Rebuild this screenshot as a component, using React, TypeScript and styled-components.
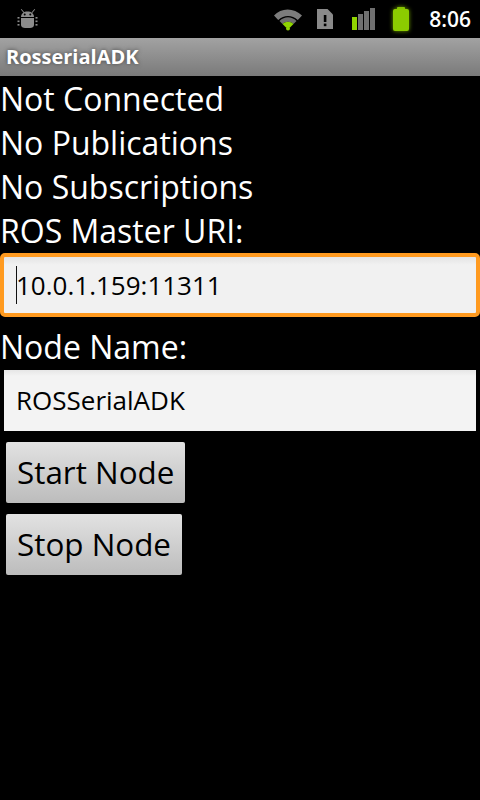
import { createGlobalStyle, styled } from "styled-components";

const Global = createGlobalStyle`
  html, body {
    margin: 0;
    padding: 0;
    background: #000;
  }
  body {
    font-family: "Open Sans", "Noto Sans", sans-serif;
  }
`;

export default function App() {
  return (
    <Screen>
      <Global />
      <StatusBar>
        <BugIcon />
        <StatusRight>
          <WifiIcon />
          <SimIcon />
          <SignalIcon />
          <BatteryIcon />
          <Clock>8:06</Clock>
        </StatusRight>
      </StatusBar>
      <TitleBar>RosserialADK</TitleBar>
      <Content>
        <Label>Not Connected</Label>
        <Label>No Publications</Label>
        <Label>No Subscriptions</Label>
        <Label>ROS Master URI:</Label>
        <FocusedField>
          <Caret />
          10.0.1.159:11311
        </FocusedField>
        <NodeLabel>Node Name:</NodeLabel>
        <Field>ROSSerialADK</Field>
        <Button>Start Node</Button>
        <Button>Stop Node</Button>
      </Content>
    </Screen>
  );
}

function BugIcon() {
  return (
    <BugSvg width="22" height="22" viewBox="0 0 22 22" fill="#8c8c8c">
      <path d="M4.5 1 L7.5 4.5 L6.8 5 L3.8 1.5 Z M17.5 1 L14.5 4.5 L15.2 5 L18.2 1.5 Z" />
      <path d="M4 9 C4 5.5 7 3.5 10.5 3.5 C14 3.5 17 5.5 17 9 Z" />
      <path d="M4 10 H17 V17 C17 19 15 20 13 20 H8 C6 20 4 19 4 17 Z" />
      <rect x="0.5" y="9" width="2" height="1.6" />
      <rect x="0.5" y="12.5" width="2" height="1.6" />
      <rect x="0.5" y="16" width="2" height="1.6" />
      <rect x="18.5" y="9" width="2" height="1.6" />
      <rect x="18.5" y="12.5" width="2" height="1.6" />
      <rect x="18.5" y="16" width="2" height="1.6" />
      <circle cx="7.7" cy="6.6" r="1" fill="#000" />
      <circle cx="13.3" cy="6.6" r="1" fill="#000" />
    </BugSvg>
  );
}

function WifiIcon() {
  return (
    <WifiSvg width="30" height="24" viewBox="0 0 30 24">
      <path d="M1 8.5 C8 0.5 21 0.5 29 8.5 L24.8 13 C19 7.5 11 7.5 5.2 13 Z" fill="#7c7c7c" />
      <path d="M6.5 14 C11.5 9 18.5 9 23.5 14 L20.5 17 C17 14 13 14 9.5 17 Z" fill="#6e6e6e" />
      <path d="M9.5 17 C13 14 17 14 20.5 17 L17 20.5 H13 Z" fill="#8fd400" />
      <circle cx="15" cy="21.6" r="2" fill="#8fd400" />
    </WifiSvg>
  );
}

function SimIcon() {
  return (
    <SimSvg width="16" height="20" viewBox="0 0 16 20">
      <path d="M0 0 H10.5 L16 5.5 V20 H0 Z" fill="#8a8a8a" />
      <rect x="6.8" y="6" width="2.6" height="7" fill="#000" />
      <rect x="6.8" y="14.6" width="2.6" height="2.6" fill="#000" />
    </SimSvg>
  );
}

function SignalIcon() {
  return (
    <SignalSvg width="24" height="22" viewBox="0 0 24 22">
      <rect x="0" y="9" width="5" height="13" fill="#8fd400" />
      <rect x="6" y="6" width="5" height="16" fill="#707070" />
      <rect x="12" y="3" width="5" height="19" fill="#707070" />
      <rect x="18" y="0" width="5" height="22" fill="#707070" />
    </SignalSvg>
  );
}

function BatteryIcon() {
  return (
    <BatterySvg width="16" height="24" viewBox="0 0 16 24">
      <rect x="4" y="0" width="8" height="3" rx="1" fill="#86c400" />
      <rect x="0" y="2" width="16" height="22" rx="2" fill="#8ccb00" />
    </BatterySvg>
  );
}

const Screen = styled.div`
  width: 480px;
  height: 800px;
  background: #000;
  overflow: hidden;
`;

const StatusBar = styled.div`
  height: 38px;
  display: flex;
  align-items: center;
  justify-content: space-between;
  padding: 0 9px 0 17px;
  box-sizing: border-box;
  background: #000;
`;

const StatusRight = styled.div`
  display: flex;
  align-items: center;
`;

const BugSvg = styled.svg`
  display: block;
`;

const WifiSvg = styled.svg`
  display: block;
  margin-right: 14px;
`;

const SimSvg = styled.svg`
  display: block;
  margin-right: 19px;
  margin-top: -1px;
`;

const SignalSvg = styled.svg`
  display: block;
  margin-right: 17px;
`;

const BatterySvg = styled.svg`
  display: block;
  margin-right: 20px;
  filter: drop-shadow(0 0 2px #6f9e00);
`;

const Clock = styled.span`
  color: #fff;
  font-size: 21px;
  font-weight: 600;
  line-height: 38px;
`;

const TitleBar = styled.div`
  height: 38px;
  box-sizing: border-box;
  padding-left: 6px;
  background: linear-gradient(#a2a2a2, #7a7a7a);
  color: #fff;
  font-size: 20px;
  font-weight: 700;
  line-height: 38px;
  text-shadow: 0 0 4px #444;
`;

const Content = styled.div`
  display: flex;
  flex-direction: column;
  align-items: flex-start;
  padding-top: 1px;
`;

const Label = styled.div`
  height: 44px;
  color: #fff;
  font-size: 32px;
  line-height: 44px;
  white-space: nowrap;
`;

const NodeLabel = styled(Label)`
  margin-top: 8px;
`;

const Field = styled.div`
  align-self: stretch;
  height: 61px;
  margin: 1px 4px 0;
  padding-left: 12px;
  box-sizing: border-box;
  background: linear-gradient(#e6e6e6 0, #f3f3f3 6px);
  color: #000;
  font-size: 26px;
  line-height: 60px;
  white-space: nowrap;
`;

const FocusedField = styled(Field)`
  position: relative;
  height: 64px;
  margin: 0;
  border: 4px solid #ff9a1f;
  border-radius: 5px;
  line-height: 56px;
  background: linear-gradient(#e4e4e4 0, #f1f1f1 8px);
`;

const Caret = styled.span`
  position: absolute;
  left: 12px;
  top: 9px;
  width: 1px;
  height: 38px;
  background: #111;
`;

const Button = styled.button`
  height: 61px;
  margin: 11px 0 0 6px;
  padding: 0 11px 2px;
  border: none;
  border-radius: 2px;
  background: linear-gradient(#e2e2e2, #bcbcbc);
  color: #000;
  font-family: inherit;
  font-size: 31.4px;
  line-height: 58px;
  white-space: nowrap;
`;
